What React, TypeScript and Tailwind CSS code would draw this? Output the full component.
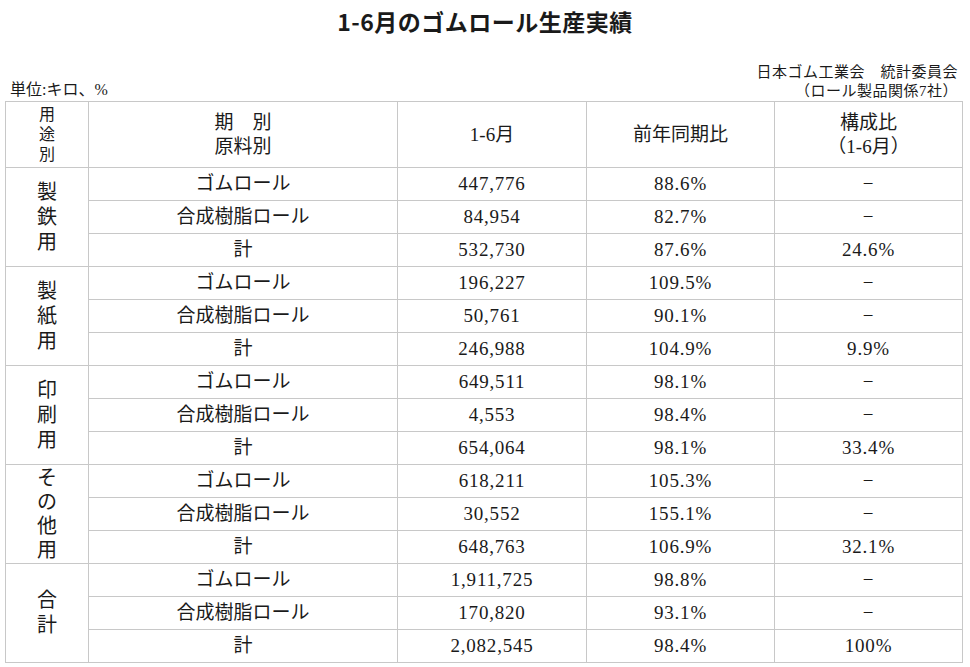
const groups = [
  {
    label: ["製", "鉄", "用"],
    rows: [
      ["ゴムロール", "447,776", "88.6%", "−"],
      ["合成樹脂ロール", "84,954", "82.7%", "−"],
      ["計", "532,730", "87.6%", "24.6%"],
    ],
  },
  {
    label: ["製", "紙", "用"],
    rows: [
      ["ゴムロール", "196,227", "109.5%", "−"],
      ["合成樹脂ロール", "50,761", "90.1%", "−"],
      ["計", "246,988", "104.9%", "9.9%"],
    ],
  },
  {
    label: ["印", "刷", "用"],
    rows: [
      ["ゴムロール", "649,511", "98.1%", "−"],
      ["合成樹脂ロール", "4,553", "98.4%", "−"],
      ["計", "654,064", "98.1%", "33.4%"],
    ],
  },
  {
    label: ["そ", "の", "他", "用"],
    rows: [
      ["ゴムロール", "618,211", "105.3%", "−"],
      ["合成樹脂ロール", "30,552", "155.1%", "−"],
      ["計", "648,763", "106.9%", "32.1%"],
    ],
  },
  {
    label: ["合", "計"],
    rows: [
      ["ゴムロール", "1,911,725", "98.8%", "−"],
      ["合成樹脂ロール", "170,820", "93.1%", "−"],
      ["計", "2,082,545", "98.4%", "100%"],
    ],
  },
];

const serif = "font-['Liberation_Serif','Noto_Sans_CJK_JP',serif]";
const cell = "border border-[#c8c8c8] text-center align-middle p-0";

export default function App() {
  return (
    <div className={`w-[970px] h-[667px] bg-white text-[#1a1a1a] ${serif} overflow-hidden`}>
      <h1 className="pt-[6px] text-center text-[23px] leading-[30px] font-bold tracking-[0.5px] font-['Noto_Sans_CJK_JP',sans-serif]">
        1-6月のゴムロール生産実績
      </h1>
      <div className="flex items-end justify-between px-[8px] mt-[27px]">
        <div className="text-[16px] leading-[20px] pl-[2px] pb-[1px]">単位:キロ、%</div>
        <div className="text-[15px] leading-[19px] text-right pr-[4px] tracking-[0.5px]">
          <div>日本ゴム工業会　統計委員会</div>
          <div>（ロール製品関係7社）</div>
        </div>
      </div>
      <table className="ml-[5px] border-collapse table-fixed w-[957px]">
        <colgroup>
          <col className="w-[83px]" />
          <col className="w-[309px]" />
          <col className="w-[189px]" />
          <col className="w-[188px]" />
          <col className="w-[188px]" />
        </colgroup>
        <thead>
          <tr className="h-[66px]">
            <th className={`${cell} font-normal text-[16px] leading-[20px]`}>
              <div>用</div>
              <div>途</div>
              <div>別</div>
            </th>
            <th className={`${cell} font-normal text-[19px] leading-[24px]`}>
              <div>期　別</div>
              <div>原料別</div>
            </th>
            <th className={`${cell} font-normal text-[19px] leading-[24px]`}>1-6月</th>
            <th className={`${cell} font-normal text-[19px] leading-[24px]`}>前年同期比</th>
            <th className={`${cell} font-normal text-[19px] leading-[24px]`}>
              <div>構成比</div>
              <div>（1-6月）</div>
            </th>
          </tr>
        </thead>
        <tbody>
          {groups.map((g) =>
            g.rows.map((r, i) => (
              <tr key={g.label.join("") + i} className="h-[33px] text-[19px] leading-[24px]">
                {i === 0 && (
                  <td rowSpan={3} className={`${cell} text-[20px]`}>
                    <div className={g.label.length === 4 ? "leading-[24px]" : "leading-[25px]"}>
                      {g.label.map((c) => (
                        <div key={c}>{c}</div>
                      ))}
                    </div>
                  </td>
                )}
                <td className={cell}>{r[0]}</td>
                <td className={`${cell} tracking-[0.8px]`}>{r[1]}</td>
                <td className={`${cell} tracking-[0.8px]`}>{r[2]}</td>
                <td className={`${cell} tracking-[0.8px]`}>{r[3]}</td>
              </tr>
            ))
          )}
        </tbody>
      </table>
    </div>
  );
}
